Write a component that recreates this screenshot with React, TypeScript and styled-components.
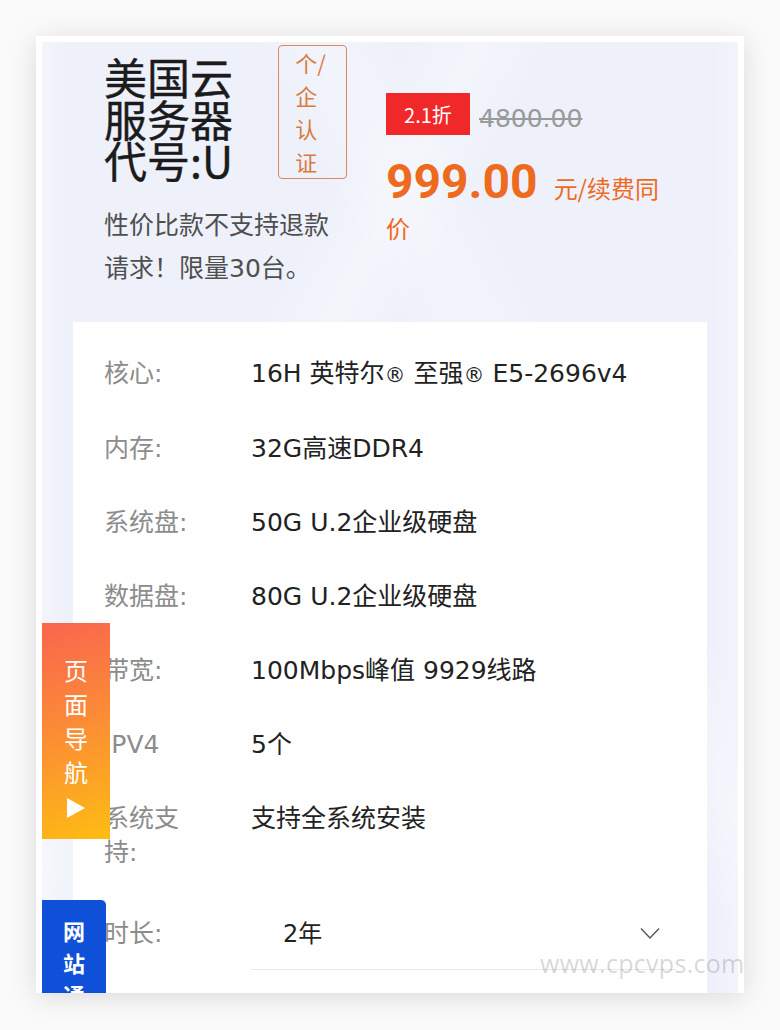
import React from "react";
import styled, { createGlobalStyle } from "styled-components";

const GlobalStyle = createGlobalStyle`
  html, body {
    margin: 0;
    padding: 0;
    background: #fafafa;
  }
  body {
    font-family: "DejaVu Sans", "Noto Sans CJK SC", sans-serif;
  }
  * { box-sizing: border-box; }
`;

const Page = styled.div`
  position: relative;
  width: 780px;
  height: 1030px;
  padding: 36px 0 0 36px;
  overflow: hidden;
  background: #fafafa;
`;

const Frame = styled.div`
  position: relative;
  width: 708px;
  height: 957px;
  border: 6px solid #ffffff;
  border-bottom: 0;
  overflow: hidden;
  box-shadow: 0 4px 26px rgba(0, 0, 0, 0.13);
  background: linear-gradient(90deg, #f3f5fb 0px, #eef1fa 26px, #eef1fa 670px, #f2f4fb 696px);
`;

const Screen = styled.div`
  padding: 0 31px;
  background-image:
    linear-gradient(118deg, rgba(255,255,255,0) 30%, rgba(255,255,255,0.3) 36%, rgba(255,255,255,0) 42%),
    linear-gradient(62deg, rgba(255,255,255,0) 60%, rgba(255,255,255,0.25) 66%, rgba(255,255,255,0) 72%);
  background-size: 100% 100%;
  background-repeat: no-repeat;
`;

const Hero = styled.section`
  display: flex;
  gap: 39px;
  padding: 3px 31px 32px;
`;

const Intro = styled.div`
  flex: none;
  width: 243px;
`;

const TitleRow = styled.div`
  display: flex;
  align-items: flex-start;
`;

const Title = styled.h1`
  margin: 11px 0 0;
  width: 131px;
  font-family: "Noto Sans CJK SC", sans-serif;
  font-size: 43px;
  line-height: 41.5px;
  font-weight: 400;
  color: #1b1b1b;
  -webkit-text-stroke: 0.4px #1b1b1b;
`;

const CertBadge = styled.div`
  margin-left: 44px;
  width: 69px;
  border: 1px solid #d98a5a;
  border-radius: 4px;
  padding: 0 14px 0 16px;
  font-family: "Noto Sans CJK SC", sans-serif;
  font-size: 22px;
  line-height: 33px;
  color: #dc7a3e;
`;

const Subtitle = styled.p`
  margin: 23px 0 0;
  font-size: 25px;
  line-height: 43px;
  color: #4f4f4f;
`;

const PriceCol = styled.div`
  flex: none;
  width: 280px;
  padding-top: 48px;
`;

const DiscountRow = styled.div`
  display: flex;
  align-items: center;
  gap: 9px;
`;

const DiscountTag = styled.span`
  width: 84px;
  height: 42px;
  display: flex;
  align-items: center;
  justify-content: center;
  background: #f1282a;
  color: #ffffff;
  font-family: "Noto Sans CJK SC", sans-serif;
  font-size: 20px;
`;

const OldPrice = styled.s`
  margin-top: 8px;
  color: #9a9a9a;
  font-size: 25px;
  font-family: "DejaVu Sans", sans-serif;
`;

const PriceLine = styled.p`
  margin: 27px 0 0;
  font-family: "Noto Sans CJK SC", sans-serif;
  font-size: 24px;
  line-height: 40px;
  color: #ee6a1f;
`;

const Amount = styled.span`
  font-family: Roboto, sans-serif;
  font-weight: 700;
  font-size: 48px;
  line-height: 40px;
  margin-right: 16px;
`;

const Specs = styled.section`
  background: #ffffff;
  padding: 15px 31px 0;
  min-height: 700px;
`;

const SpecRow = styled.div`
  display: flex;
  align-items: flex-start;
  padding: 20px 0;
  font-size: 25px;
  line-height: 34px;
`;

const SpecLabel = styled.div`
  flex: 0 0 98px;
  margin-right: 49px;
  color: #8c8c8c;
`;

const SpecValue = styled.div`
  color: #222222;
`;

const Reg = styled.span`
  font-size: 21px;
`;

const SelectRow = styled.div`
  display: flex;
  align-items: center;
  padding-top: 9px;
  font-size: 25px;
  line-height: 34px;
`;

const Select = styled.div`
  flex: 1;
  height: 71px;
  display: flex;
  align-items: center;
  justify-content: space-between;
  padding: 0 16px 0 32px;
  border-bottom: 1px solid #e8e8e8;
  color: #222222;
  font-size: 24px;
`;

const NavTab = styled.div`
  position: absolute;
  left: 0;
  top: 581px;
  width: 68px;
  height: 216px;
  padding-top: 30px;
  display: flex;
  flex-direction: column;
  align-items: center;
  background: linear-gradient(160deg, #f9654f 0%, #fb8a37 45%, #fdbd12 100%);
  color: #ffffff;
  font-family: "Noto Sans CJK SC", sans-serif;
  font-size: 24px;
  line-height: 34px;
`;

const VerticalText = styled.div<{ $w: number }>`
  width: ${(p) => p.$w}px;
  text-align: center;
`;

const SiteTab = styled.div`
  position: absolute;
  left: 0;
  top: 858px;
  width: 64px;
  height: 200px;
  padding-top: 14px;
  display: flex;
  flex-direction: column;
  align-items: center;
  background: #0f50d8;
  border-top-right-radius: 5px;
  color: #ffffff;
  font-family: "Noto Sans CJK SC", sans-serif;
  font-weight: 700;
  font-size: 22px;
  line-height: 32px;
`;

const Arrow = styled.svg`
  margin-top: 9px;
  display: block;
`;

const Watermark = styled.div`
  position: absolute;
  left: 540px;
  top: 946px;
  font-family: "Open Sans", sans-serif;
  font-size: 25px;
  color: rgba(0, 0, 0, 0.17);
  letter-spacing: 0.3px;
  pointer-events: none;
`;

const specs: { label: string; value: React.ReactNode }[] = [
  {
    label: "核心:",
    value: (
      <>
        16H 英特尔<Reg>®</Reg> 至强<Reg>®</Reg> E5-2696v4
      </>
    ),
  },
  { label: "内存:", value: "32G高速DDR4" },
  { label: "系统盘:", value: "50G U.2企业级硬盘" },
  { label: "数据盘:", value: "80G U.2企业级硬盘" },
  { label: "带宽:", value: "100Mbps峰值 9929线路" },
  { label: "IPV4", value: "5个" },
  { label: "系统支持:", value: "支持全系统安装" },
];

export default function App() {
  return (
    <Page>
      <GlobalStyle />
      <Frame>
        <Screen>
          <Hero>
            <Intro>
              <TitleRow>
                <Title>美国云服务器代号:U</Title>
                <CertBadge>个/企认证</CertBadge>
              </TitleRow>
              <Subtitle>性价比款不支持退款请求！限量30台。</Subtitle>
            </Intro>
            <PriceCol>
              <DiscountRow>
                <DiscountTag>2.1折</DiscountTag>
                <OldPrice>4800.00</OldPrice>
              </DiscountRow>
              <PriceLine>
                <Amount>999.00</Amount>元/续费同价
              </PriceLine>
            </PriceCol>
          </Hero>
          <Specs>
            {specs.map((s) => (
              <SpecRow key={s.label}>
                <SpecLabel>{s.label}</SpecLabel>
                <SpecValue>{s.value}</SpecValue>
              </SpecRow>
            ))}
            <SelectRow>
              <SpecLabel>时长:</SpecLabel>
              <Select>
                <span>2年</span>
                <svg width="20" height="13" viewBox="0 0 20 13">
                  <polyline points="1,1.5 10,11 19,1.5" fill="none" stroke="#555" strokeWidth="1.4" />
                </svg>
              </Select>
            </SelectRow>
          </Specs>
        </Screen>
        <NavTab>
          <VerticalText $w={26}>页面导航</VerticalText>
          <Arrow width="18" height="20" viewBox="0 0 18 20">
            <polygon points="0,0 18,10 0,20" fill="#ffffff" />
          </Arrow>
        </NavTab>
        <SiteTab>
          <VerticalText $w={24}>网站通</VerticalText>
        </SiteTab>
      </Frame>
      <Watermark>www.cpcvps.com</Watermark>
    </Page>
  );
}
